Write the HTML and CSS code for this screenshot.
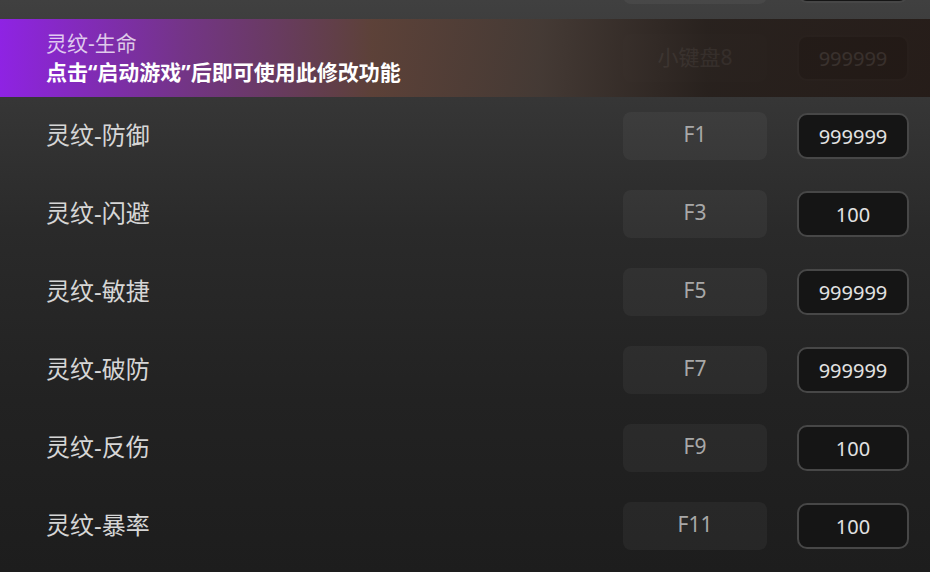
FILE: index.html
```html
<!DOCTYPE html>
<html lang="zh-CN">
<head>
<meta charset="utf-8">
<title>灵纹修改</title>
<link rel="stylesheet" href="styles.css">
</head>
<body>
<div class="list">
    <div class="row">
        <span class="label"></span>
        <div class="key"></div>
        <div class="value"></div>
    </div>
    <div class="row">
        <span class="label"></span>
        <div class="key">小键盘8</div>
        <div class="value">999999</div>
        <div class="tip">
            <div class="tip-title">灵纹-生命</div>
            <div class="tip-text">点击“启动游戏”后即可使用此修改功能</div>
        </div>
    </div>
    <div class="row">
        <span class="label">灵纹-防御</span>
        <div class="key">F1</div>
        <div class="value">999999</div>
    </div>
    <div class="row">
        <span class="label">灵纹-闪避</span>
        <div class="key">F3</div>
        <div class="value">100</div>
    </div>
    <div class="row">
        <span class="label">灵纹-敏捷</span>
        <div class="key">F5</div>
        <div class="value">999999</div>
    </div>
    <div class="row">
        <span class="label">灵纹-破防</span>
        <div class="key">F7</div>
        <div class="value">999999</div>
    </div>
    <div class="row">
        <span class="label">灵纹-反伤</span>
        <div class="key">F9</div>
        <div class="value">100</div>
    </div>
    <div class="row">
        <span class="label">灵纹-暴率</span>
        <div class="key">F11</div>
        <div class="value">100</div>
    </div>
</div>
</body>
</html>
```

FILE: styles.css
```css
html, body {
  height: 100%;
}
body {
  margin: 0;
  overflow: hidden;
  font-family: "Noto Sans", "Noto Sans CJK SC", sans-serif;
  background: linear-gradient(180deg, #404040 0, #353535 110px, #2a2a2a 230px, #222222 400px, #1d1d1d 572px);
}
.list {
  margin-top: -59px;
}
.row {
  position: relative;
  display: flex;
  align-items: center;
  height: 78px;
  padding: 0 21px 0 46px;
}
.label {
  flex: 1;
  margin-bottom: 5px;
  font-size: 24px;
  color: #d6d6d6;
}
.key {
  box-sizing: border-box;
  width: 144px;
  height: 48px;
  margin-right: 30px;
  padding-bottom: 5px;
  display: flex;
  align-items: center;
  justify-content: center;
  border-radius: 8px;
  background: rgba(255, 255, 255, 0.045);
  font-size: 21px;
  color: #a8a8a8;
}
.value {
  box-sizing: border-box;
  width: 112px;
  height: 46px;
  display: flex;
  align-items: center;
  justify-content: center;
  border: 2px solid #474747;
  border-radius: 10px;
  background: #151515;
  font-size: 20px;
  color: #e2e2e2;
}
.tip {
  position: absolute;
  top: 0;
  left: 0;
  right: 0;
  bottom: 0;
  display: flex;
  flex-direction: column;
  justify-content: center;
  padding-left: 46px;
  background: linear-gradient(90deg, rgba(146, 34, 234, 0.96) 0, rgba(120, 52, 140, 0.92) 20%, rgba(96, 66, 56, 0.9) 40%, rgba(70, 58, 52, 0.88) 58%, rgba(38, 30, 26, 0.88) 76%, rgba(36, 26, 22, 0.9) 100%);
}
.tip-title {
  font-size: 21px;
  line-height: 29px;
  color: rgba(255, 255, 255, 0.75);
}
.tip-text {
  font-size: 21px;
  line-height: 29px;
  font-weight: bold;
  color: #ffffff;
}
```
